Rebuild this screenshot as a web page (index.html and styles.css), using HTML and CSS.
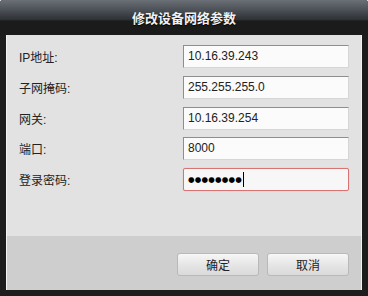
FILE: index.html
```html
<!DOCTYPE html>
<html lang="zh">
<head>
  <meta charset="UTF-8">
  <title>修改设备网络参数</title>
  <link rel="stylesheet" href="styles.css">
</head>
<body>

<div class="dialog">
  <div class="titlebar">修改设备网络参数</div>

  <div class="content">
    <!-- form rows -->
    <div class="form">
      <div class="row">
        <label>IP地址:</label>
        <div class="field">10.16.39.243</div>
      </div>
      <div class="row">
        <label>子网掩码:</label>
        <div class="field">255.255.255.0</div>
      </div>
      <div class="row">
        <label>网关:</label>
        <div class="field">10.16.39.254</div>
      </div>
      <div class="row">
        <label>端口:</label>
        <div class="field">8000</div>
      </div>
      <div class="row">
        <label>登录密码:</label>
        <div class="field focus"><span class="dots">●●●●●●●●</span><span class="caret"></span></div>
      </div>
    </div>

    <!-- buttons -->
    <div class="footer">
      <button>确定</button>
      <button>取消</button>
    </div>
  </div>
</div>

</body>
</html>
```

FILE: styles.css
```css
body {
  margin: 0;
  padding: 0;
  background: #ffffff;
  font-family: "Liberation Sans", "Noto Sans CJK SC", sans-serif;
}

.dialog {
  width: 368px;
  height: 296px;
  background: #1d1d1d;
  border-radius: 3px 3px 0 0;
  display: flex;
  flex-direction: column;
  overflow: hidden;
}

.titlebar {
  height: 35px;
  flex: none;
  background: linear-gradient(to bottom, #6b7077 0%, #4a4f55 30%, #2e3135 56%, #1b1b1b 60%, #1b1b1b 100%);
  color: #f2f2f2;
  font-family: "Noto Sans CJK SC", sans-serif;
  font-weight: bold;
  font-size: 13px;
  text-align: center;
  line-height: 36px;
  text-shadow: 0 1px 1px #000;
}

.content {
  flex: 1;
  margin: 0 6px 6px 6px;
  display: flex;
  flex-direction: column;
  border-right: 1px solid #f3f3f3;
  border-left: 1px solid #f3f3f3;
}

.form {
  height: 201px;
  background: #e2e2e2;
  padding: 10px 0 0 12px;
  box-sizing: border-box;
  display: flex;
  flex-direction: column;
  gap: 7.75px;
}

.row {
  display: flex;
  align-items: center;
  height: 23px;
}

.row label {
  width: 164px;
  font-size: 12px;
  color: #222;
  font-family: "Liberation Sans", "Noto Sans CJK SC", sans-serif;
}

.field {
  width: 166px;
  height: 23px;
  box-sizing: border-box;
  background: #fbfbfb;
  border: 1px solid #d6d6d6;
  border-top-color: #8e8e8e;
  border-left-color: #8e8e8e;
  font-size: 12px;
  color: #222;
  padding-left: 4px;
  line-height: 21px;
  display: flex;
  align-items: center;
}

.field.focus {
  border: 1px solid #d77373;
  border-radius: 2px;
  box-shadow: 0 0 1px #e8a0a0;
  background: #f7f7f7;
}

.dots {
  font-family: "DejaVu Sans", sans-serif;
  font-size: 7.5px;
  letter-spacing: 0.2px;
  color: #000;
}

.caret {
  width: 1px;
  height: 15px;
  background: #000;
  margin-left: 1px;
}

.footer {
  flex: 1;
  background: #cecece;
  display: flex;
  justify-content: flex-end;
  align-items: flex-start;
  padding: 17px 12px 0 0;
  gap: 8px;
}

button {
  width: 82px;
  height: 23px;
  border: 1px solid #b9b9b9;
  border-radius: 3px;
  background: linear-gradient(to bottom, #f7f7f7 0%, #e6e6e6 50%, #dadada 100%);
  font-family: "Noto Sans CJK SC", sans-serif;
  font-size: 12px;
  color: #222;
  padding: 0;
  cursor: pointer;
}
```
